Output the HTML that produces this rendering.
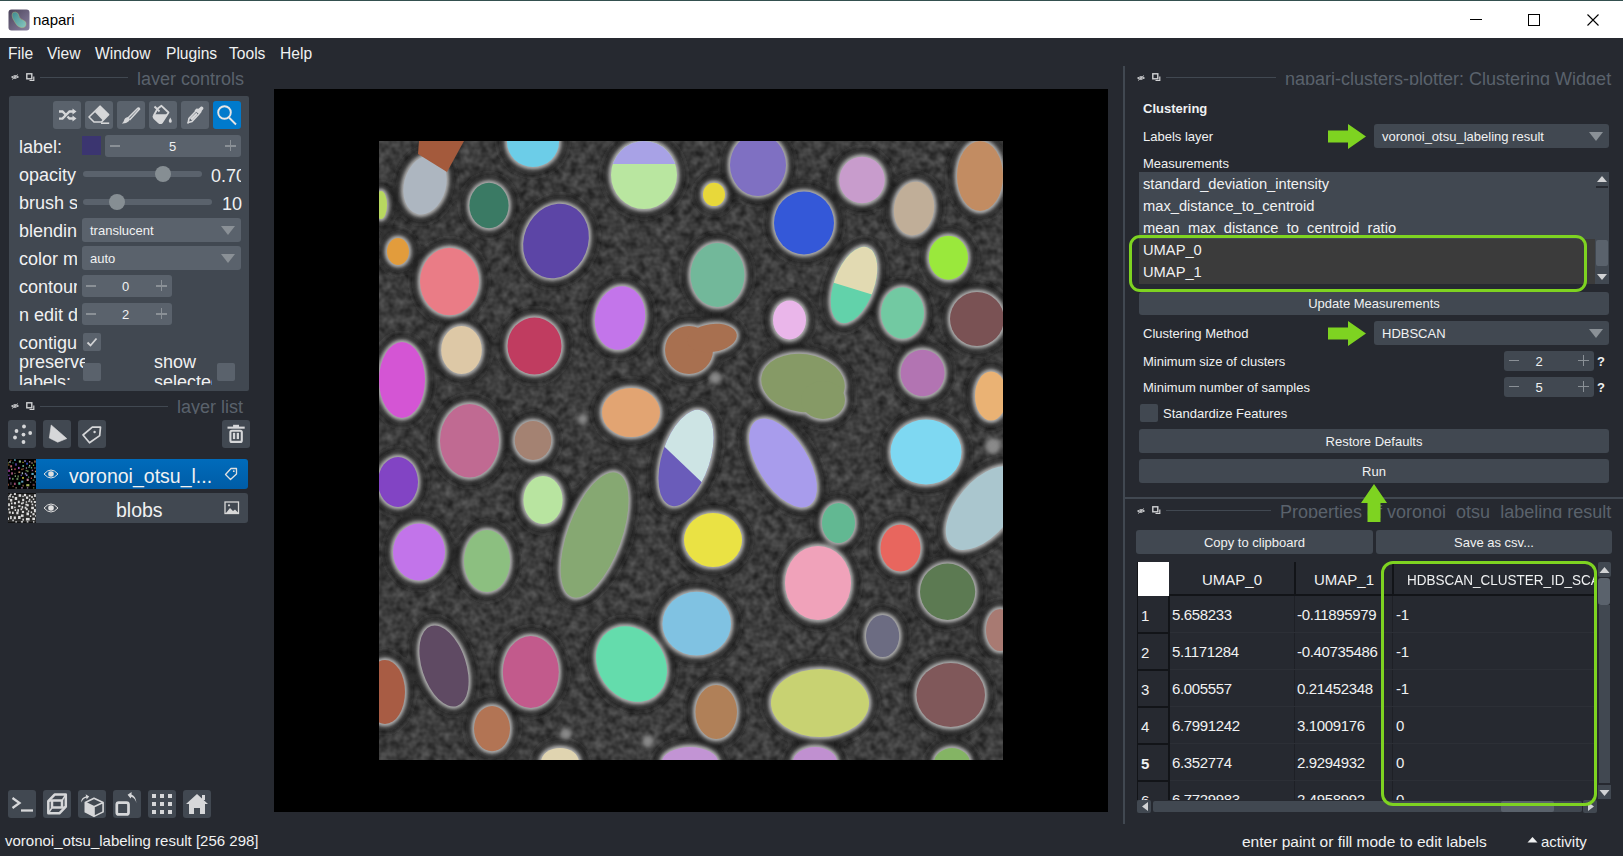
<!DOCTYPE html>
<html><head><meta charset="utf-8">
<style>
*{margin:0;padding:0;box-sizing:border-box}
html,body{width:1623px;height:856px;overflow:hidden;background:#262930;font-family:"Liberation Sans",sans-serif;color:#f0f1f2}
.a{position:absolute}
.t{position:absolute;white-space:nowrap;line-height:1}
#title{left:0;top:0;width:1623px;height:38px;background:#fff;border-top:1px solid #34504f}
.btn{position:absolute;background:#5a626c;border-radius:3px}
.pan{position:absolute;background:#414851;border-radius:2px}
.lbl{font-size:18px;color:#f0f1f2}
.hdr{font-size:18px;color:#5a626c}
.sm{font-size:13px}
.clip{overflow:hidden;position:absolute}
</style></head><body>
<div id="title" class="a">
  <svg class="a" style="left:8px;top:8px" width="22" height="22" viewBox="0 0 22 22"><defs><linearGradient id="lg" x1="0" y1="0" x2="1" y2="1"><stop offset="0" stop-color="#4a4258"/><stop offset="1" stop-color="#8a82a2"/></linearGradient><linearGradient id="lg2" x1="0" y1="0" x2="1" y2="1"><stop offset="0" stop-color="#3e8a90"/><stop offset="1" stop-color="#8ac8c0"/></linearGradient></defs><rect x="0.5" y="0.5" width="21" height="21" rx="3" fill="url(#lg)"/><path d="M4 6Q4 2.5 7.5 3Q10.5 3.5 11 7Q11.5 10 15 11Q19 12.5 18 16Q17 19.5 12.5 18.5Q9 17.5 7 13.5Q4 9 4 6Z" fill="url(#lg2)" stroke="#c0b070" stroke-width="0.4"/></svg>
<div class="t" style="left:33px;top:11px;font-size:15px;color:#000">napari</div>
  <div class="a" style="left:1470px;top:18px;width:12px;height:1px;background:#000"></div>
  <div class="a" style="left:1528px;top:13px;width:12px;height:12px;border:1px solid #000"></div>
  <svg class="a" style="left:1587px;top:13px" width="12" height="12"><path d="M0.5 0.5L11.5 11.5M11.5 0.5L0.5 11.5" stroke="#000" stroke-width="1.1"/></svg>
</div>
<!-- menu -->
<div class="t" style="left:8px;top:46px;font-size:15.6px">File</div>
<div class="t" style="left:47px;top:46px;font-size:15.6px">View</div>
<div class="t" style="left:95px;top:46px;font-size:15.6px">Window</div>
<div class="t" style="left:166px;top:46px;font-size:15.6px">Plugins</div>
<div class="t" style="left:229px;top:46px;font-size:15.6px">Tools</div>
<div class="t" style="left:280px;top:46px;font-size:15.6px">Help</div>


<!-- left dock: layer controls -->
<svg class="a" style="left:11px;top:74px" width="8" height="6" viewBox="0 0 8 6"><path d="M0.5 3Q4 0 7.5 3Q4 6 0.5 3Z" fill="none" stroke="#c8c9cb" stroke-width="1"/><circle cx="4" cy="3" r="1" fill="#c8c9cb"/><path d="M1 5.5L7 0.5" stroke="#c8c9cb" stroke-width="0.9"/></svg>
<svg class="a" style="left:26px;top:73px" width="9" height="9" viewBox="0 0 9 9"><rect x="0.8" y="0.8" width="5" height="5" fill="none" stroke="#d1d2d4" stroke-width="1.4"/><path d="M3.5 7.5H7.8V3.5" fill="none" stroke="#d1d2d4" stroke-width="1.2"/></svg>
<div class="a" style="left:40px;top:77px;width:88px;height:1px;background:#414851"></div>
<div class="clip" style="left:130px;top:66px;width:120px;height:19px"><div class="t hdr" style="left:7px;top:4px">layer controls</div></div>
<div class="pan" style="left:9px;top:96px;width:240px;height:295px"></div>

<!-- tool buttons -->
<div class="btn" style="left:53px;top:101px;width:28px;height:28px"></div>
<svg class="a" style="left:53px;top:101px" width="28" height="28" viewBox="0 0 28 28"><g fill="none" stroke="#d6d7d9" stroke-width="2.4"><path d="M6 10.5H9.5L12.5 13.5"/><path d="M14.5 15.5L16.5 17.5H20"/><path d="M6 17.6H9.5L16.5 10.5H20"/></g><path d="M19.5 7.5L23.5 10.5L19.5 13.5Z M19.5 14.5L23.5 17.5L19.5 20.5Z" fill="#d6d7d9"/></svg>
<div class="btn" style="left:85px;top:101px;width:28px;height:28px"></div>
<svg class="a" style="left:85px;top:101px" width="28" height="28" viewBox="0 0 28 28"><path d="M15.2 5.2L23.6 13.6L16.5 21H9L4 16Z" fill="none" stroke="#d6d7d9" stroke-width="1.6" stroke-linejoin="round"/><path d="M15.2 5.2L23.6 13.6L17.6 19.2L9.8 11Z" fill="#d6d7d9"/><path d="M16 22.2H24.2" stroke="#d6d7d9" stroke-width="1.6"/></svg>
<div class="btn" style="left:117px;top:101px;width:28px;height:28px"></div>
<svg class="a" style="left:117px;top:101px" width="28" height="28" viewBox="0 0 28 28"><path d="M10.5 17.5L20.5 7.5Q22 6.5 22.5 8L12.5 19" fill="none" stroke="#d6d7d9" stroke-width="1.6"/><path d="M10.8 16.2Q7.5 16.5 7 19.5Q6.5 21.5 4.8 22.4Q9 22.8 11.5 20.5Q13 19 12.8 17.8Z" fill="#d6d7d9"/></svg>
<div class="btn" style="left:149px;top:101px;width:28px;height:28px"></div>
<svg class="a" style="left:149px;top:101px" width="28" height="28" viewBox="0 0 28 28"><path d="M5.5 5.5L10.5 10.5" stroke="#d6d7d9" stroke-width="1.8"/><path d="M8.5 7.8L12.5 4.8L19.5 11.5L13 21.5Q11.5 22.8 9.8 21.5L5 17Q4 15.8 4.8 14.5Z" fill="none" stroke="#d6d7d9" stroke-width="1.8" stroke-linejoin="round"/><path d="M5.5 13.2L18.8 13.2L13 21.5Q11.5 22.8 9.8 21.5L5 17Q4 15.8 4.8 14.5Z" fill="#d6d7d9"/><path d="M21.3 16.5Q19.5 19.5 19.8 20.3Q20.2 21.8 21.3 21.8Q22.6 21.8 22.8 20.3Q23 19.5 21.3 16.5Z" fill="#d6d7d9"/></svg>
<div class="btn" style="left:181px;top:101px;width:28px;height:28px"></div>
<svg class="a" style="left:181px;top:101px" width="28" height="28" viewBox="0 0 28 28"><path d="M15 10L8 17.5L7.2 21.5L6.5 22.5" fill="none" stroke="#d6d7d9" stroke-width="1.6"/><path d="M18 13L11 20.5L7.2 21.5" fill="none" stroke="#d6d7d9" stroke-width="1.6"/><path d="M13.5 9.5L15.5 7.5L17.5 7.8L20 5.5Q22 5 22.5 7Q22.5 8 21 9.5L20.2 11.5L18.5 13.5Z" fill="#d6d7d9"/><path d="M9 17.5L15.5 11.5L16.5 13.5L11 19.5Z" fill="#d6d7d9"/></svg>
<div class="btn" style="left:213px;top:101px;width:28px;height:28px;background:#007acc"></div>
<svg class="a" style="left:213px;top:101px" width="28" height="28" viewBox="0 0 28 28"><circle cx="11.5" cy="11.5" r="6.3" fill="none" stroke="#e6e6e6" stroke-width="1.9"/><path d="M16.2 16.8L23 23.5" stroke="#e6e6e6" stroke-width="1.9"/></svg>

<!-- layer control rows -->
<div class="clip" style="left:19px;top:136px;width:58px;height:240px">
 <div class="t lbl" style="left:0;top:2px">label:</div>
 <div class="t lbl" style="left:0;top:30px">opacity</div>
 <div class="t lbl" style="left:0;top:58px">brush size</div>
 <div class="t lbl" style="left:0;top:86px">blending</div>
 <div class="t lbl" style="left:0;top:114px">color mode</div>
 <div class="t lbl" style="left:0;top:142px">contour</div>
 <div class="t lbl" style="left:0;top:170px">n edit dim</div>
 <div class="t lbl" style="left:0;top:198px">contiguous</div>
</div>
<div class="a" style="left:82px;top:136px;width:19px;height:19px;background:#3b3570"></div>
<div class="btn" style="left:105px;top:135px;width:136px;height:22px;border-radius:3px"></div>
<div class="a" style="left:110px;top:145px;width:10px;height:1.5px;background:#8a9096"></div>
<div class="t" style="left:169px;top:140px;font-size:13px">5</div>
<div class="a" style="left:225px;top:145px;width:11px;height:1.5px;background:#8a9096"></div>
<div class="a" style="left:229.8px;top:140px;width:1.5px;height:11px;background:#8a9096"></div>
<!-- opacity slider -->
<div class="a" style="left:83px;top:171px;width:119px;height:6px;border-radius:3px;background:#5a626c"></div>
<div class="a" style="left:155px;top:166px;width:16px;height:16px;border-radius:8px;background:#868e93"></div>
<div class="clip" style="left:211px;top:165px;width:30px;height:22px"><div class="t lbl" style="left:0;top:2px">0.70</div></div>
<!-- brush slider -->
<div class="a" style="left:83px;top:199px;width:129px;height:6px;border-radius:3px;background:#5a626c"></div>
<div class="a" style="left:109px;top:194px;width:16px;height:16px;border-radius:8px;background:#868e93"></div>
<div class="t lbl" style="left:222px;top:195px">10</div>
<!-- dropdowns -->
<div class="btn" style="left:82px;top:218px;width:159px;height:24px"></div>
<div class="t" style="left:90px;top:224px;font-size:13px">translucent</div>
<svg class="a" style="left:221px;top:226px" width="14" height="9"><path d="M0 0H14L7 9Z" fill="#8a9096"/></svg>
<div class="btn" style="left:82px;top:246px;width:159px;height:24px"></div>
<div class="t" style="left:90px;top:252px;font-size:13px">auto</div>
<svg class="a" style="left:221px;top:254px" width="14" height="9"><path d="M0 0H14L7 9Z" fill="#8a9096"/></svg>
<!-- contour spin -->
<div class="btn" style="left:82px;top:275px;width:90px;height:22px"></div>
<div class="a" style="left:86px;top:285px;width:10px;height:1.5px;background:#8a9096"></div>
<div class="t" style="left:122px;top:280px;font-size:13px">0</div>
<div class="a" style="left:156px;top:285px;width:11px;height:1.5px;background:#8a9096"></div>
<div class="a" style="left:160.8px;top:280px;width:1.5px;height:11px;background:#8a9096"></div>
<div class="btn" style="left:82px;top:303px;width:90px;height:22px"></div>
<div class="a" style="left:86px;top:313px;width:10px;height:1.5px;background:#8a9096"></div>
<div class="t" style="left:122px;top:308px;font-size:13px">2</div>
<div class="a" style="left:156px;top:313px;width:11px;height:1.5px;background:#8a9096"></div>
<div class="a" style="left:160.8px;top:308px;width:1.5px;height:11px;background:#8a9096"></div>
<!-- checkboxes -->
<div class="btn" style="left:83px;top:333px;width:18px;height:18px;border-radius:2px"></div>
<svg class="a" style="left:83px;top:333px" width="18" height="18"><path d="M4.5 9.5L7.5 12.5L13.5 5.5" fill="none" stroke="#d1d2d4" stroke-width="1.8"/></svg>
<div class="clip" style="left:19px;top:357px;width:66px;height:28px">
 <div class="t lbl" style="left:0;top:-4px">preserve</div>
 <div class="t lbl" style="left:0;top:16px">labels:</div>
</div>
<div class="btn" style="left:83px;top:363px;width:18px;height:18px;border-radius:2px"></div>
<div class="clip" style="left:154px;top:357px;width:58px;height:28px">
 <div class="t lbl" style="left:0;top:-4px">show</div>
 <div class="t lbl" style="left:0;top:16px">selected</div>
</div>
<div class="btn" style="left:217px;top:363px;width:18px;height:18px;border-radius:2px"></div>

<!-- layer list -->
<svg class="a" style="left:11px;top:403px" width="8" height="6" viewBox="0 0 8 6"><path d="M0.5 3Q4 0 7.5 3Q4 6 0.5 3Z" fill="none" stroke="#c8c9cb" stroke-width="1"/><circle cx="4" cy="3" r="1" fill="#c8c9cb"/><path d="M1 5.5L7 0.5" stroke="#c8c9cb" stroke-width="0.9"/></svg>
<svg class="a" style="left:26px;top:402px" width="9" height="9" viewBox="0 0 9 9"><rect x="0.8" y="0.8" width="5" height="5" fill="none" stroke="#d1d2d4" stroke-width="1.4"/><path d="M3.5 7.5H7.8V3.5" fill="none" stroke="#d1d2d4" stroke-width="1.2"/></svg>
<div class="a" style="left:40px;top:406px;width:128px;height:1px;background:#414851"></div>
<div class="clip" style="left:170px;top:395px;width:80px;height:19px"><div class="t hdr" style="left:7px;top:3px">layer list</div></div>
<div class="btn" style="left:8px;top:420px;width:28px;height:28px;background:#414851"></div>
<svg class="a" style="left:8px;top:420px" width="28" height="28" viewBox="0 0 28 28"><g fill="#d6d7d9"><circle cx="16" cy="6.5" r="1.9"/><circle cx="8.5" cy="11" r="1.9"/><circle cx="22.2" cy="13" r="1.9"/><circle cx="15.5" cy="14.6" r="1.9"/><circle cx="7" cy="17.5" r="1.9"/><circle cx="15.5" cy="22" r="1.9"/></g></svg>
<div class="btn" style="left:43px;top:420px;width:28px;height:28px;background:#414851"></div>
<svg class="a" style="left:43px;top:420px" width="28" height="28" viewBox="0 0 28 28"><path d="M8.2 5L23.8 18.6L14.7 22.2L6.3 18Z" fill="#d6d7d9" stroke="#d6d7d9" stroke-width="0.6" stroke-linejoin="round"/></svg>
<div class="btn" style="left:78px;top:420px;width:28px;height:28px;background:#414851"></div>
<svg class="a" style="left:78px;top:420px" width="28" height="28" viewBox="0 0 28 28"><path d="M5 15L14.3 7.2H22.5L21.7 15.6L11.5 22.8Z" fill="none" stroke="#d6d7d9" stroke-width="1.7" stroke-linejoin="round"/><circle cx="16.6" cy="12" r="1.2" fill="#d6d7d9"/></svg>
<div class="btn" style="left:222px;top:420px;width:28px;height:28px;background:#414851"></div>
<svg class="a" style="left:222px;top:420px" width="28" height="28" viewBox="0 0 28 28"><g fill="#d6d7d9"><rect x="11.1" y="4.8" width="5.9" height="2.5"/><rect x="5.5" y="6.6" width="17.2" height="2.1"/><rect x="10.9" y="12.8" width="2.3" height="6.3"/><rect x="14.7" y="12.8" width="2.3" height="6.3"/></g><rect x="8.4" y="10.7" width="11.4" height="11.2" rx="1.5" fill="none" stroke="#d6d7d9" stroke-width="2.1"/></svg>
<!-- layer rows -->
<svg class="a" style="left:8px;top:459px" width="28" height="30" viewBox="0 0 28 30"><rect width="28" height="30" fill="#000"/><rect x="1.31" y="2.01" width="1.32" height="2.01" fill="#b3bac2" opacity="0.8"/><rect x="2.24" y="0.80" width="1.26" height="1.20" fill="#a45a3c" opacity="0.8"/><rect x="4.32" y="3.18" width="1.23" height="1.43" fill="#2f7a5f" opacity="0.8"/><rect x="6.09" y="0.26" width="1.63" height="1.57" fill="#6ccde8" opacity="0.8"/><rect x="6.94" y="4.29" width="2.01" height="2.39" fill="#5c45a6" opacity="0.8"/><rect x="0.25" y="5.36" width="1.20" height="1.20" fill="#e29c3c" opacity="0.8"/><rect x="2.24" y="6.25" width="1.85" height="2.12" fill="#ea7c86" opacity="0.8"/><rect x="3.06" y="9.62" width="1.28" height="1.51" fill="#ddc8a6" opacity="0.8"/><rect x="6.13" y="9.30" width="1.70" height="1.79" fill="#c03c60" opacity="0.8"/><rect x="0.31" y="10.53" width="1.44" height="2.39" fill="#d455d4" opacity="0.8"/><rect x="10.85" y="1.46" width="2.07" height="2.14" fill="#b9e6a0" opacity="0.8"/><rect x="16.13" y="1.10" width="1.76" height="1.95" fill="#7f70c2" opacity="0.8"/><rect x="14.43" y="2.80" width="1.20" height="1.20" fill="#e8d83a" opacity="0.8"/><rect x="18.13" y="3.69" width="1.88" height="1.98" fill="#2c56da" opacity="0.8"/><rect x="14.34" y="6.01" width="1.70" height="2.01" fill="#72b89a" opacity="0.8"/><rect x="10.03" y="7.94" width="1.57" height="2.01" fill="#c375ea" opacity="0.8"/><rect x="17.82" y="8.42" width="1.20" height="1.22" fill="#eab6ea" opacity="0.8"/><rect x="20.96" y="2.02" width="1.43" height="1.46" fill="#d092d0" opacity="0.8"/><rect x="23.38" y="3.19" width="1.26" height="1.70" fill="#c2aa92" opacity="0.8"/><rect x="26.25" y="1.47" width="1.44" height="2.20" fill="#c28c62" opacity="0.8"/><rect x="24.93" y="5.55" width="1.23" height="1.38" fill="#9ae83c" opacity="0.8"/><rect x="22.82" y="7.91" width="1.35" height="1.62" fill="#72c9a2" opacity="0.8"/><rect x="25.99" y="8.14" width="1.70" height="1.70" fill="#7c4d52" opacity="0.8"/><rect x="3.13" y="13.29" width="1.85" height="2.31" fill="#c06a92" opacity="0.8"/><rect x="6.31" y="13.82" width="1.20" height="1.23" fill="#a48272" opacity="0.8"/><rect x="0.22" y="15.52" width="1.26" height="1.57" fill="#8244c4" opacity="0.8"/><rect x="6.74" y="16.36" width="1.23" height="1.51" fill="#b2e296" opacity="0.8"/><rect x="0.98" y="18.55" width="1.63" height="1.79" fill="#c274ea" opacity="0.8"/><rect x="4.12" y="18.87" width="1.44" height="1.95" fill="#84c274" opacity="0.8"/><rect x="9.49" y="16.39" width="1.38" height="2.07" fill="#7aa66a" opacity="0.8"/><rect x="8.47" y="18.84" width="1.82" height="2.20" fill="#7aa66a" opacity="0.8"/><rect x="10.40" y="12.41" width="1.82" height="1.54" fill="#e2a472" opacity="0.8"/><rect x="17.56" y="10.87" width="1.76" height="1.44" fill="#7a9a5c" opacity="0.8"/><rect x="18.90" y="11.41" width="1.70" height="1.70" fill="#7a9a5c" opacity="0.8"/><rect x="23.70" y="10.68" width="1.38" height="1.46" fill="#b274b2" opacity="0.8"/><rect x="26.86" y="11.67" width="1.20" height="1.54" fill="#eab274" opacity="0.8"/><rect x="23.43" y="13.93" width="2.23" height="2.04" fill="#7ad6f4" opacity="0.8"/><rect x="16.79" y="13.84" width="1.51" height="1.70" fill="#a89cec" opacity="0.8"/><rect x="17.89" y="15.36" width="1.63" height="1.70" fill="#a89cec" opacity="0.8"/><rect x="26.06" y="16.23" width="1.63" height="2.83" fill="#a8c6d0" opacity="0.8"/><rect x="20.02" y="17.51" width="1.20" height="1.26" fill="#5cba8a" opacity="0.8"/><rect x="22.77" y="18.52" width="1.26" height="1.48" fill="#e46262" opacity="0.8"/><rect x="14.08" y="18.06" width="1.82" height="1.70" fill="#eae244" opacity="0.8"/><rect x="18.66" y="19.67" width="2.07" height="2.32" fill="#eaa0b8" opacity="0.8"/><rect x="24.65" y="20.34" width="1.73" height="1.77" fill="#5c7a52" opacity="0.8"/><rect x="22.00" y="22.55" width="1.20" height="1.32" fill="#646478" opacity="0.8"/><rect x="27.27" y="22.28" width="1.20" height="1.32" fill="#a87a72" opacity="0.8"/><rect x="18.25" y="25.15" width="3.08" height="2.14" fill="#cad86e" opacity="0.8"/><rect x="24.58" y="24.85" width="2.15" height="2.01" fill="#7c4c52" opacity="0.8"/><rect x="13.18" y="21.66" width="2.15" height="2.00" fill="#74bce2" opacity="0.8"/><rect x="10.29" y="23.21" width="2.07" height="2.51" fill="#64dcac" opacity="0.8"/><rect x="14.48" y="25.77" width="1.31" height="1.70" fill="#b27c54" opacity="0.8"/><rect x="2.23" y="23.24" width="1.38" height="2.64" fill="#5f4a63" opacity="0.8"/><rect x="-0.36" y="24.72" width="1.26" height="2.01" fill="#a85c44" opacity="0.8"/><rect x="5.93" y="23.70" width="1.76" height="2.26" fill="#c25a8c" opacity="0.8"/><rect x="4.47" y="26.65" width="1.20" height="1.43" fill="#b27454" opacity="0.8"/><rect x="7.52" y="28.27" width="1.20" height="1.20" fill="#e0d4b0" opacity="0.8"/><rect x="13.08" y="28.27" width="1.76" height="1.20" fill="#c294d4" opacity="0.8"/><rect x="18.87" y="28.27" width="1.38" height="1.20" fill="#c090d0" opacity="0.8"/><rect x="25.11" y="28.31" width="1.20" height="1.20" fill="#84b464" opacity="0.8"/><rect x="-0.51" y="3.27" width="1.20" height="1.20" fill="#b8d860" opacity="0.8"/><rect x="13.74" y="13.28" width="1.32" height="2.01" fill="#cde4e4" opacity="0.8"/><rect x="12.64" y="15.55" width="1.38" height="1.51" fill="#6a5cba" opacity="0.8"/><rect x="20.40" y="7.65" width="1.20" height="1.32" fill="#62d2aa" opacity="0.8"/><rect x="21.07" y="5.91" width="1.20" height="1.57" fill="#e2dab2" opacity="0.8"/><rect x="13.11" y="9.75" width="1.51" height="1.44" fill="#aa6c4c" opacity="0.8"/><rect x="14.51" y="9.33" width="1.32" height="1.20" fill="#aa6c4c" opacity="0.8"/></svg>
<div class="a" style="left:36px;top:459px;width:212px;height:30px;background:linear-gradient(#006bbb,#005ca6);border-radius:0 3px 3px 0"></div>
<svg class="a" style="left:43px;top:468px" width="16" height="12" viewBox="0 0 16 12"><path d="M1 6Q8 -2 15 6Q8 14 1 6Z" fill="none" stroke="#e0e0e0" stroke-width="1"/><circle cx="8" cy="6" r="2.8" fill="#e0e0e0"/></svg>
<div class="t" style="left:69px;top:467px;font-size:19.5px">voronoi_otsu_l...</div>
<svg class="a" style="left:224px;top:467px" width="14" height="14" viewBox="0 0 14 14"><path d="M7 1.5H12.5V7L6.5 12.5L1.5 7.5Z" fill="none" stroke="#e0e0e0" stroke-width="1.3" stroke-linejoin="round"/><circle cx="9.8" cy="4.2" r="0.9" fill="#e0e0e0"/></svg>
<svg class="a" style="left:8px;top:493px" width="28" height="30" viewBox="0 0 28 30"><rect width="28" height="30" fill="#111"/><rect x="0" y="1" width="28" height="28" fill="#2a2a2a"/><rect x="1.17" y="1.80" width="1.60" height="2.44" fill="#dcdcdc"/><rect x="2.11" y="0.70" width="1.53" height="1.40" fill="#dcdcdc"/><rect x="4.19" y="3.03" width="1.50" height="1.73" fill="#dcdcdc"/><rect x="5.92" y="0.09" width="1.98" height="1.91" fill="#dcdcdc"/><rect x="6.72" y="4.04" width="2.44" height="2.90" fill="#dcdcdc"/><rect x="0.15" y="5.26" width="1.40" height="1.40" fill="#dcdcdc"/><rect x="2.04" y="6.02" width="2.25" height="2.57" fill="#dcdcdc"/><rect x="2.93" y="9.46" width="1.55" height="1.83" fill="#dcdcdc"/><rect x="5.95" y="9.11" width="2.06" height="2.17" fill="#dcdcdc"/><rect x="0.15" y="10.28" width="1.75" height="2.90" fill="#dcdcdc"/><rect x="10.63" y="1.23" width="2.52" height="2.59" fill="#dcdcdc"/><rect x="15.94" y="0.89" width="2.14" height="2.36" fill="#dcdcdc"/><rect x="14.33" y="2.70" width="1.40" height="1.40" fill="#dcdcdc"/><rect x="17.93" y="3.48" width="2.29" height="2.40" fill="#dcdcdc"/><rect x="14.16" y="5.79" width="2.06" height="2.44" fill="#dcdcdc"/><rect x="9.86" y="7.72" width="1.91" height="2.44" fill="#dcdcdc"/><rect x="17.72" y="8.29" width="1.40" height="1.49" fill="#dcdcdc"/><rect x="20.81" y="1.86" width="1.73" height="1.78" fill="#dcdcdc"/><rect x="23.24" y="3.00" width="1.53" height="2.06" fill="#dcdcdc"/><rect x="26.09" y="1.24" width="1.75" height="2.67" fill="#dcdcdc"/><rect x="24.80" y="5.40" width="1.50" height="1.68" fill="#dcdcdc"/><rect x="22.67" y="7.73" width="1.64" height="1.97" fill="#dcdcdc"/><rect x="25.80" y="7.96" width="2.06" height="2.06" fill="#dcdcdc"/><rect x="2.94" y="13.04" width="2.25" height="2.81" fill="#dcdcdc"/><rect x="6.21" y="13.69" width="1.40" height="1.50" fill="#dcdcdc"/><rect x="0.09" y="15.35" width="1.53" height="1.91" fill="#dcdcdc"/><rect x="6.61" y="16.19" width="1.50" height="1.83" fill="#dcdcdc"/><rect x="0.80" y="18.36" width="1.98" height="2.17" fill="#dcdcdc"/><rect x="3.97" y="18.66" width="1.75" height="2.36" fill="#dcdcdc"/><rect x="9.35" y="16.16" width="1.68" height="2.52" fill="#dcdcdc"/><rect x="8.27" y="18.60" width="2.21" height="2.67" fill="#dcdcdc"/><rect x="10.20" y="12.25" width="2.21" height="1.87" fill="#dcdcdc"/><rect x="17.37" y="10.71" width="2.14" height="1.75" fill="#dcdcdc"/><rect x="18.71" y="11.23" width="2.06" height="2.06" fill="#dcdcdc"/><rect x="23.55" y="10.52" width="1.68" height="1.78" fill="#dcdcdc"/><rect x="26.76" y="11.51" width="1.40" height="1.87" fill="#dcdcdc"/><rect x="23.19" y="13.72" width="2.71" height="2.48" fill="#dcdcdc"/><rect x="16.63" y="13.66" width="1.83" height="2.06" fill="#dcdcdc"/><rect x="17.72" y="15.18" width="1.98" height="2.06" fill="#dcdcdc"/><rect x="25.89" y="15.93" width="1.98" height="3.43" fill="#dcdcdc"/><rect x="19.92" y="17.38" width="1.40" height="1.53" fill="#dcdcdc"/><rect x="22.64" y="18.37" width="1.53" height="1.79" fill="#dcdcdc"/><rect x="13.88" y="17.87" width="2.21" height="2.06" fill="#dcdcdc"/><rect x="18.44" y="19.42" width="2.52" height="2.82" fill="#dcdcdc"/><rect x="24.46" y="20.15" width="2.11" height="2.15" fill="#dcdcdc"/><rect x="21.90" y="22.41" width="1.40" height="1.60" fill="#dcdcdc"/><rect x="27.17" y="22.14" width="1.40" height="1.60" fill="#dcdcdc"/><rect x="17.92" y="24.92" width="3.74" height="2.59" fill="#dcdcdc"/><rect x="24.34" y="24.64" width="2.62" height="2.44" fill="#dcdcdc"/><rect x="12.95" y="21.44" width="2.62" height="2.43" fill="#dcdcdc"/><rect x="10.07" y="22.94" width="2.52" height="3.05" fill="#dcdcdc"/><rect x="14.34" y="25.59" width="1.59" height="2.06" fill="#dcdcdc"/><rect x="2.08" y="22.96" width="1.68" height="3.20" fill="#dcdcdc"/><rect x="-0.49" y="24.50" width="1.53" height="2.44" fill="#dcdcdc"/><rect x="5.74" y="23.45" width="2.14" height="2.75" fill="#dcdcdc"/><rect x="4.37" y="26.50" width="1.40" height="1.73" fill="#dcdcdc"/><rect x="7.40" y="28.17" width="1.45" height="1.40" fill="#dcdcdc"/><rect x="12.89" y="28.17" width="2.14" height="1.40" fill="#dcdcdc"/><rect x="18.73" y="28.17" width="1.68" height="1.40" fill="#dcdcdc"/><rect x="25.01" y="28.21" width="1.40" height="1.40" fill="#dcdcdc"/><rect x="-0.61" y="3.17" width="1.40" height="1.40" fill="#dcdcdc"/><rect x="13.60" y="13.06" width="1.60" height="2.44" fill="#dcdcdc"/><rect x="12.49" y="15.39" width="1.68" height="1.83" fill="#dcdcdc"/><rect x="20.28" y="7.51" width="1.45" height="1.60" fill="#dcdcdc"/><rect x="20.97" y="5.75" width="1.40" height="1.91" fill="#dcdcdc"/><rect x="12.95" y="9.59" width="1.83" height="1.75" fill="#dcdcdc"/><rect x="14.37" y="9.23" width="1.60" height="1.40" fill="#dcdcdc"/></svg>
<div class="a" style="left:36px;top:493px;width:212px;height:30px;background:#414851;border-radius:0 3px 3px 0"></div>
<svg class="a" style="left:43px;top:502px" width="16" height="12" viewBox="0 0 16 12"><path d="M1 6Q8 -2 15 6Q8 14 1 6Z" fill="none" stroke="#e0e0e0" stroke-width="1"/><circle cx="8" cy="6" r="2.8" fill="#e0e0e0"/></svg>
<div class="t" style="left:116px;top:501px;font-size:19.5px">blobs</div>
<svg class="a" style="left:224px;top:501px" width="16" height="14" viewBox="0 0 16 14"><rect x="1" y="1" width="13.5" height="11.5" fill="none" stroke="#d8d8d8" stroke-width="1.3"/><path d="M2 12L6 7L9 10L11 8.5L14 11.5V12.5H2Z" fill="#d8d8d8"/><circle cx="5" cy="4.3" r="1.1" fill="#d8d8d8"/></svg>
<!-- bottom toolbar -->
<div class="btn" style="left:8px;top:790px;width:28px;height:28px;background:#414851"></div>
<svg class="a" style="left:8px;top:790px" width="28" height="28" viewBox="0 0 28 28"><path d="M4.5 8L11.5 13L4.5 18" fill="none" stroke="#d6d7d9" stroke-width="2.3"/><path d="M13 20.5H25" stroke="#d6d7d9" stroke-width="2.3"/></svg>
<div class="btn" style="left:43px;top:790px;width:28px;height:28px;background:#414851"></div>
<svg class="a" style="left:43px;top:790px" width="28" height="28" viewBox="0 0 28 28"><g fill="none" stroke="#d6d7d9" stroke-width="2.5" stroke-linejoin="round"><path d="M5.3 11.2L11.6 4.6H22.8V16.7L16.4 23.3H5.3Z"/><rect x="9" y="10.6" width="10" height="7"/></g><g stroke="#d6d7d9" stroke-width="1.6"><path d="M9 10.6L5.3 11.2M19 10.6L22.8 4.6M19 17.6L22.8 16.7M9 17.6L5.3 23.3"/></g></svg>
<div class="btn" style="left:78px;top:790px;width:28px;height:28px;background:#414851"></div>
<svg class="a" style="left:78px;top:790px" width="28" height="28" viewBox="0 0 28 28"><path d="M7.3 12.5L16 16.7V26.4L7.3 21.9Z" fill="#d6d7d9"/><path d="M16 8.3L25.1 12.5V21.9L16 26.4L7.3 21.9V12.5Z M7.3 12.5L16 16.7L25.1 12.5 M16 16.7V26.4" fill="none" stroke="#d6d7d9" stroke-width="1.6" stroke-linejoin="round"/><path d="M3.2 12.4Q2.8 7.5 8.2 6.2L7.6 4.2L11.2 6.5L8.6 9.4L8.4 7.8Q5 8.6 3.2 12.4Z" fill="#d6d7d9"/></svg>
<div class="btn" style="left:113px;top:790px;width:28px;height:28px;background:#414851"></div>
<svg class="a" style="left:113px;top:790px" width="28" height="28" viewBox="0 0 28 28"><rect x="3.8" y="12.6" width="11.7" height="11.8" rx="2" fill="none" stroke="#d6d7d9" stroke-width="2.7"/><path d="M23.4 13.2Q22.5 8.5 18.4 6.8L17.6 8.6L14.6 4.8L18.6 2L18.5 4.6Q23 6.5 23.4 13.2Z" fill="#d6d7d9"/></svg>
<div class="btn" style="left:148px;top:790px;width:28px;height:28px;background:#414851"></div>
<svg class="a" style="left:148px;top:790px" width="28" height="28" viewBox="0 0 28 28"><g fill="#d6d7d9"><rect x="4" y="4" width="4" height="4"/><rect x="12" y="4" width="4" height="4"/><rect x="20" y="4" width="4" height="4"/><rect x="4" y="12" width="4" height="4"/><rect x="12" y="12" width="4" height="4"/><rect x="20" y="12" width="4" height="4"/><rect x="4" y="20" width="4" height="4"/><rect x="12" y="20" width="4" height="4"/><rect x="20" y="20" width="4" height="4"/></g></svg>
<div class="btn" style="left:183px;top:790px;width:28px;height:28px;background:#414851"></div>
<svg class="a" style="left:183px;top:790px" width="28" height="28" viewBox="0 0 28 28"><path d="M14 4L25 14H22V24H17V18H11V24H6V14H3Z" fill="#d6d7d9"/><rect x="19" y="5" width="3" height="5" fill="#d6d7d9"/></svg>
<div class="t" style="left:5px;top:833px;font-size:15px">voronoi_otsu_labeling result [256 298]</div>

<!-- right dock -->
<div class="a" style="left:1123px;top:66px;width:2px;height:758px;background:#414851"></div>
<svg class="a" style="left:1137px;top:75px" width="8" height="6" viewBox="0 0 8 6"><path d="M0.5 3Q4 0 7.5 3Q4 6 0.5 3Z" fill="none" stroke="#c8c9cb" stroke-width="1"/><circle cx="4" cy="3" r="1" fill="#c8c9cb"/><path d="M1 5.5L7 0.5" stroke="#c8c9cb" stroke-width="0.9"/></svg>
<svg class="a" style="left:1152px;top:73px" width="9" height="9" viewBox="0 0 9 9"><rect x="0.8" y="0.8" width="5" height="5" fill="none" stroke="#d1d2d4" stroke-width="1.4"/><path d="M3.5 7.5H7.8V3.5" fill="none" stroke="#d1d2d4" stroke-width="1.2"/></svg>
<div class="a" style="left:1166px;top:77px;width:110px;height:1px;background:#414851"></div>
<div class="clip" style="left:1280px;top:66px;width:340px;height:19px"><div class="t hdr" style="left:5px;top:4px">napari-clusters-plotter: Clustering Widget</div></div>
<div class="t sm" style="left:1143px;top:102px;font-weight:bold">Clustering</div>
<div class="t sm" style="left:1143px;top:130px">Labels layer</div>
<svg class="a" style="left:1328px;top:124px" width="38" height="25" viewBox="0 0 38 25"><path d="M0 6.5H20V0L38 12.5L20 25V18.5H0Z" fill="#7ed321"/></svg>
<div class="btn" style="left:1374px;top:124px;width:235px;height:24px;background:#414851"></div>
<div class="t sm" style="left:1382px;top:130px">voronoi_otsu_labeling result</div>
<svg class="a" style="left:1589px;top:132px" width="14" height="9"><path d="M0 0H14L7 9Z" fill="#8a9096"/></svg>
<div class="t sm" style="left:1143px;top:157px">Measurements</div>
<div class="a" style="left:1139px;top:172px;width:470px;height:112px;background:#414851"></div>
<div class="clip" style="left:1139px;top:172px;width:456px;height:112px">
 <div class="t" style="left:4px;top:4.5px;font-size:14.7px">standard_deviation_intensity</div>
 <div class="t" style="left:4px;top:26.5px;font-size:14.7px">max_distance_to_centroid</div>
 <div class="t" style="left:4px;top:48.5px;font-size:14.7px">mean_max_distance_to_centroid_ratio</div>
 <div class="a" style="left:0;top:67px;width:456px;height:45px;background:#3b3b3b"></div>
 <div class="t" style="left:4px;top:70.5px;font-size:14.7px">UMAP_0</div>
 <div class="t" style="left:4px;top:92.5px;font-size:14.7px">UMAP_1</div>
</div>
<!-- list scrollbar -->
<div class="a" style="left:1595px;top:172px;width:14px;height:112px;background:#414851"></div>
<svg class="a" style="left:1596px;top:175px" width="12" height="8"><path d="M1 7H11L6 1Z" fill="#d1d2d4"/></svg>
<div class="a" style="left:1596px;top:186px;width:12px;height:2px;background:#262930"></div>
<div class="a" style="left:1596px;top:240px;width:12px;height:26px;background:#5a626c;border-radius:2px"></div>
<svg class="a" style="left:1596px;top:273px" width="12" height="8"><path d="M1 1H11L6 7Z" fill="#d1d2d4"/></svg>
<div class="a" style="left:1129px;top:235px;width:458px;height:57px;border:3px solid #7ed321;border-radius:11px"></div>
<div class="btn" style="left:1139px;top:292px;width:470px;height:23px;background:#414851"></div>
<div class="t sm" style="left:1139px;top:297px;width:470px;text-align:center">Update Measurements</div>
<div class="t sm" style="left:1143px;top:327px">Clustering Method</div>
<svg class="a" style="left:1328px;top:321px" width="38" height="25" viewBox="0 0 38 25"><path d="M0 6.5H20V0L38 12.5L20 25V18.5H0Z" fill="#7ed321"/></svg>
<div class="btn" style="left:1374px;top:321px;width:235px;height:24px;background:#414851"></div>
<div class="t sm" style="left:1382px;top:327px">HDBSCAN</div>
<svg class="a" style="left:1589px;top:329px" width="14" height="9"><path d="M0 0H14L7 9Z" fill="#8a9096"/></svg>
<div class="t sm" style="left:1143px;top:355px">Minimum size of clusters</div>
<div class="btn" style="left:1504px;top:351px;width:90px;height:20px;background:#414851"></div>
<div class="a" style="left:1509px;top:360px;width:10px;height:1.3px;background:#8a9096"></div>
<div class="t sm" style="left:1535.5px;top:355px">2</div>
<div class="a" style="left:1578px;top:360px;width:11px;height:1.3px;background:#8a9096"></div>
<div class="a" style="left:1582.8px;top:355px;width:1.3px;height:11px;background:#8a9096"></div>
<div class="t sm" style="left:1597px;top:355px;font-weight:bold">?</div>
<div class="t sm" style="left:1143px;top:381px">Minimum number of samples</div>
<div class="btn" style="left:1504px;top:377px;width:90px;height:20px;background:#414851"></div>
<div class="a" style="left:1509px;top:386px;width:10px;height:1.3px;background:#8a9096"></div>
<div class="t sm" style="left:1535.5px;top:381px">5</div>
<div class="a" style="left:1578px;top:386px;width:11px;height:1.3px;background:#8a9096"></div>
<div class="a" style="left:1582.8px;top:381px;width:1.3px;height:11px;background:#8a9096"></div>
<div class="t sm" style="left:1597px;top:381px;font-weight:bold">?</div>
<div class="btn" style="left:1140px;top:404px;width:18px;height:18px;background:#414851;border-radius:2px"></div>
<div class="t sm" style="left:1163px;top:407px">Standardize Features</div>
<div class="btn" style="left:1139px;top:429px;width:470px;height:24px;background:#414851"></div>
<div class="t sm" style="left:1139px;top:435px;width:470px;text-align:center">Restore Defaults</div>
<div class="btn" style="left:1139px;top:459px;width:470px;height:24px;background:#414851"></div>
<div class="t sm" style="left:1139px;top:465px;width:470px;text-align:center">Run</div>
<div class="a" style="left:1125px;top:497px;width:498px;height:2px;background:#414851"></div>
<!-- properties -->
<svg class="a" style="left:1137px;top:508px" width="8" height="6" viewBox="0 0 8 6"><path d="M0.5 3Q4 0 7.5 3Q4 6 0.5 3Z" fill="none" stroke="#c8c9cb" stroke-width="1"/><circle cx="4" cy="3" r="1" fill="#c8c9cb"/><path d="M1 5.5L7 0.5" stroke="#c8c9cb" stroke-width="0.9"/></svg>
<svg class="a" style="left:1152px;top:506px" width="9" height="9" viewBox="0 0 9 9"><rect x="0.8" y="0.8" width="5" height="5" fill="none" stroke="#d1d2d4" stroke-width="1.4"/><path d="M3.5 7.5H7.8V3.5" fill="none" stroke="#d1d2d4" stroke-width="1.2"/></svg>
<div class="a" style="left:1166px;top:510px;width:105px;height:1px;background:#414851"></div>
<div class="clip" style="left:1276px;top:499px;width:340px;height:19px"><div class="t hdr" style="left:4px;top:4px">Properties of voronoi_otsu_labeling result</div></div>
<svg class="a" style="left:1361px;top:484px" width="26" height="38" viewBox="0 0 26 38"><path d="M6.5 38V19H0L13 0L26 19H19.5V38Z" fill="#7ed321"/></svg>
<div class="btn" style="left:1136px;top:530px;width:237px;height:24px;background:#414851"></div>
<div class="t sm" style="left:1136px;top:536px;width:237px;text-align:center">Copy to clipboard</div>
<div class="btn" style="left:1376px;top:530px;width:236px;height:24px;background:#414851"></div>
<div class="t sm" style="left:1376px;top:536px;width:236px;text-align:center">Save as csv...</div>

<!-- table -->
<div class="clip" style="left:1137px;top:562px;width:458px;height:238px">
 <div class="a" style="left:0;top:0;width:32px;height:34px;background:#fff"></div>
 <div class="a" style="left:32px;top:0;width:426px;height:32px;background:#262930"></div>
 <div class="a" style="left:32px;top:32px;width:426px;height:2px;background:#121418"></div>
 <div class="a" style="left:157px;top:0;width:2px;height:32px;background:#121418"></div>
 <div class="a" style="left:255px;top:0;width:2px;height:32px;background:#121418"></div>
 <div class="t" style="left:32px;top:10px;width:126px;text-align:center;font-size:15px">UMAP_0</div>
 <div class="t" style="left:159px;top:10px;width:96px;text-align:center;font-size:15px">UMAP_1</div>
 <div class="t" style="left:270px;top:10px;font-size:15px;transform:scaleX(0.9);transform-origin:0 0">HDBSCAN_CLUSTER_ID_SCALER</div>
 <div class="a" style="left:31px;top:34px;width:2px;height:210px;background:#121418"></div>
 <div class="a" style="left:157px;top:34px;width:1px;height:210px;background:#1e2026"></div>
 <div class="a" style="left:255px;top:34px;width:1px;height:210px;background:#1e2026"></div>
 <div class="a" style="left:1px;top:70px;width:30px;height:2px;background:#121418"></div>
 <div class="a" style="left:33px;top:70px;width:425px;height:1px;background:#2c2f36"></div>
 <div class="t" style="left:4px;top:46px;font-size:15px">1</div>
 <div class="t" style="left:35px;top:45px;font-size:15px;letter-spacing:-0.35px">5.658233</div>
 <div class="t" style="left:160px;top:45px;font-size:15px;letter-spacing:-0.35px">-0.11895979</div>
 <div class="t" style="left:259px;top:45px;font-size:15px;letter-spacing:-0.35px">-1</div>
 <div class="a" style="left:1px;top:107px;width:30px;height:2px;background:#121418"></div>
 <div class="a" style="left:33px;top:107px;width:425px;height:1px;background:#2c2f36"></div>
 <div class="t" style="left:4px;top:83px;font-size:15px">2</div>
 <div class="t" style="left:35px;top:82px;font-size:15px;letter-spacing:-0.35px">5.1171284</div>
 <div class="t" style="left:160px;top:82px;font-size:15px;letter-spacing:-0.35px">-0.40735486</div>
 <div class="t" style="left:259px;top:82px;font-size:15px;letter-spacing:-0.35px">-1</div>
 <div class="a" style="left:1px;top:144px;width:30px;height:2px;background:#121418"></div>
 <div class="a" style="left:33px;top:144px;width:425px;height:1px;background:#2c2f36"></div>
 <div class="t" style="left:4px;top:120px;font-size:15px">3</div>
 <div class="t" style="left:35px;top:119px;font-size:15px;letter-spacing:-0.35px">6.005557</div>
 <div class="t" style="left:160px;top:119px;font-size:15px;letter-spacing:-0.35px">0.21452348</div>
 <div class="t" style="left:259px;top:119px;font-size:15px;letter-spacing:-0.35px">-1</div>
 <div class="a" style="left:1px;top:181px;width:30px;height:2px;background:#121418"></div>
 <div class="a" style="left:33px;top:181px;width:425px;height:1px;background:#2c2f36"></div>
 <div class="t" style="left:4px;top:157px;font-size:15px">4</div>
 <div class="t" style="left:35px;top:156px;font-size:15px;letter-spacing:-0.35px">6.7991242</div>
 <div class="t" style="left:160px;top:156px;font-size:15px;letter-spacing:-0.35px">3.1009176</div>
 <div class="t" style="left:259px;top:156px;font-size:15px;letter-spacing:-0.35px">0</div>
 <div class="a" style="left:1px;top:218px;width:30px;height:2px;background:#121418"></div>
 <div class="a" style="left:33px;top:218px;width:425px;height:1px;background:#2c2f36"></div>
 <div class="t" style="left:4px;top:194px;font-size:15px;font-weight:bold">5</div>
 <div class="t" style="left:35px;top:193px;font-size:15px;letter-spacing:-0.35px">6.352774</div>
 <div class="t" style="left:160px;top:193px;font-size:15px;letter-spacing:-0.35px">2.9294932</div>
 <div class="t" style="left:259px;top:193px;font-size:15px;letter-spacing:-0.35px">0</div>
 <div class="a" style="left:1px;top:255px;width:30px;height:2px;background:#121418"></div>
 <div class="a" style="left:33px;top:255px;width:425px;height:1px;background:#2c2f36"></div>
 <div class="t" style="left:4px;top:231px;font-size:15px">6</div>
 <div class="t" style="left:35px;top:230px;font-size:15px;letter-spacing:-0.35px">6.7729983</div>
 <div class="t" style="left:160px;top:230px;font-size:15px;letter-spacing:-0.35px">2.4958992</div>
 <div class="t" style="left:259px;top:230px;font-size:15px;letter-spacing:-0.35px">0</div>
</div>
<div class="a" style="left:1137px;top:562px;width:1px;height:238px;background:#121418"></div>
<!-- v scrollbar -->
<div class="a" style="left:1598px;top:562px;width:13px;height:238px;background:#262930"></div>
<div class="a" style="left:1598px;top:562px;width:13px;height:15px;background:#414851;border-radius:2px"></div><svg class="a" style="left:1598px;top:565px" width="13" height="9"><path d="M1.5 8H11.5L6.5 2Z" fill="#d1d2d4"/></svg>
<div class="a" style="left:1598px;top:578px;width:12px;height:27px;background:#5a626c;border-radius:3px"></div>
<div class="a" style="left:1599px;top:605px;width:11px;height:178px;background:#414851"></div>
<div class="a" style="left:1598px;top:785px;width:13px;height:14px;background:#414851"></div>
<svg class="a" style="left:1598px;top:788px" width="13" height="9"><path d="M1.5 2H11.5L6.5 8Z" fill="#d1d2d4"/></svg>
<!-- h scrollbar -->
<div class="a" style="left:1137px;top:800px;width:460px;height:13px;background:#262930"></div><div class="a" style="left:1137px;top:800px;width:14px;height:13px;background:#414851;border-radius:2px"></div><div class="a" style="left:1583px;top:800px;width:14px;height:13px;background:#414851;border-radius:2px"></div>
<svg class="a" style="left:1139px;top:800px" width="12" height="13"><path d="M9 2V11L3 6.5Z" fill="#d1d2d4"/></svg>
<div class="a" style="left:1153px;top:801px;width:429px;height:11px;background:#414851;border-radius:2px"></div>
<div class="a" style="left:1501px;top:801px;width:53px;height:11px;background:#5a626c;border-radius:2px"></div>
<svg class="a" style="left:1585px;top:800px" width="12" height="13"><path d="M3 2V11L9 6.5Z" fill="#d1d2d4"/></svg>
<div class="a" style="left:1381px;top:561px;width:216px;height:245px;border:3px solid #7ed321;border-radius:12px"></div>
<!-- status right -->
<div class="t" style="left:1242px;top:834px;font-size:15.5px">enter paint or fill mode to edit labels</div>
<svg class="a" style="left:1527px;top:836px" width="11" height="7"><path d="M0.5 6.5H10.5L5.5 1Z" fill="#f0f1f2"/></svg>
<div class="t" style="left:1541px;top:834px;font-size:15px">activity</div>
<!-- canvas -->
<div class="a" style="left:274px;top:89px;width:834px;height:723px;background:#000"></div>

<!-- blobs --><svg class="a" style="left:379px;top:141px" width="624" height="619" viewBox="0 0 624 619">
<defs><filter id="bl" x="-10%" y="-10%" width="120%" height="120%"><feGaussianBlur stdDeviation="4"/></filter>
<filter id="bl2" x="-10%" y="-10%" width="120%" height="120%"><feGaussianBlur stdDeviation="0.8"/></filter><filter id="bl3" x="-10%" y="-10%" width="120%" height="120%"><feGaussianBlur stdDeviation="2"/></filter>
<filter id="nz" x="0" y="0" width="100%" height="100%" color-interpolation-filters="sRGB"><feTurbulence type="fractalNoise" baseFrequency="0.12" numOctaves="2" seed="7"/><feColorMatrix type="matrix" values="0.3 0 0 0 0.09  0.3 0 0 0 0.09  0.3 0 0 0 0.09  0 0 0 0 1"/></filter></defs>
<rect width="624" height="619" fill="#2e2e2e"/>
<rect width="624" height="619" filter="url(#nz)"/>
<g filter="url(#bl)"><ellipse cx="46.0" cy="44.0" rx="29.0" ry="38.0" transform="rotate(15 46.0 44.0)" fill="#1e1e1e"/><ellipse cx="110.0" cy="64.5" rx="27.6" ry="30.7" transform="rotate(0 110.0 64.5)" fill="#1e1e1e"/><ellipse cx="154.0" cy="1.0" rx="34.0" ry="33.0" transform="rotate(0 154.0 1.0)" fill="#1e1e1e"/><ellipse cx="177.0" cy="100.0" rx="40.0" ry="46.0" transform="rotate(22 177.0 100.0)" fill="#1e1e1e"/><ellipse cx="19.0" cy="110.5" rx="19.0" ry="21.5" transform="rotate(0 19.0 110.5)" fill="#1e1e1e"/><ellipse cx="70.5" cy="140.5" rx="37.5" ry="41.7" transform="rotate(0 70.5 140.5)" fill="#1e1e1e"/><ellipse cx="82.5" cy="209.0" rx="28.3" ry="32.0" transform="rotate(0 82.5 209.0)" fill="#1e1e1e"/><ellipse cx="155.5" cy="205.0" rx="35.0" ry="36.5" transform="rotate(0 155.5 205.0)" fill="#1e1e1e"/><ellipse cx="23.0" cy="239.0" rx="31.0" ry="46.0" transform="rotate(0 23.0 239.0)" fill="#1e1e1e"/><ellipse cx="265.0" cy="34.0" rx="41.0" ry="42.0" transform="rotate(0 265.0 34.0)" fill="#1e1e1e"/><ellipse cx="379.0" cy="24.0" rx="36.0" ry="39.0" transform="rotate(0 379.0 24.0)" fill="#1e1e1e"/><ellipse cx="335.0" cy="53.4" rx="19.0" ry="19.7" transform="rotate(0 335.0 53.4)" fill="#1e1e1e"/><ellipse cx="425.0" cy="82.0" rx="38.0" ry="39.5" transform="rotate(0 425.0 82.0)" fill="#1e1e1e"/><ellipse cx="338.5" cy="134.0" rx="35.0" ry="40.0" transform="rotate(0 338.5 134.0)" fill="#1e1e1e"/><ellipse cx="241.0" cy="177.0" rx="33.0" ry="40.0" transform="rotate(10 241.0 177.0)" fill="#1e1e1e"/><ellipse cx="410.5" cy="179.0" rx="24.5" ry="27.5" transform="rotate(0 410.5 179.0)" fill="#1e1e1e"/><ellipse cx="483.0" cy="39.0" rx="30.7" ry="31.3" transform="rotate(0 483.0 39.0)" fill="#1e1e1e"/><ellipse cx="535.0" cy="67.6" rx="28.0" ry="35.0" transform="rotate(8 535.0 67.6)" fill="#1e1e1e"/><ellipse cx="601.0" cy="35.0" rx="31.0" ry="43.0" transform="rotate(0 601.0 35.0)" fill="#1e1e1e"/><ellipse cx="569.4" cy="116.7" rx="27.6" ry="30.0" transform="rotate(0 569.4 116.7)" fill="#1e1e1e"/><ellipse cx="523.5" cy="172.0" rx="29.5" ry="33.8" transform="rotate(0 523.5 172.0)" fill="#1e1e1e"/><ellipse cx="598.0" cy="178.0" rx="35.0" ry="35.0" transform="rotate(0 598.0 178.0)" fill="#1e1e1e"/><ellipse cx="90.5" cy="299.7" rx="37.5" ry="44.8" transform="rotate(0 90.5 299.7)" fill="#1e1e1e"/><ellipse cx="154.0" cy="299.5" rx="26.3" ry="27.6" transform="rotate(0 154.0 299.5)" fill="#1e1e1e"/><ellipse cx="19.0" cy="341.0" rx="28.0" ry="33.0" transform="rotate(0 19.0 341.0)" fill="#1e1e1e"/><ellipse cx="164.0" cy="359.0" rx="27.6" ry="32.0" transform="rotate(0 164.0 359.0)" fill="#1e1e1e"/><ellipse cx="40.0" cy="411.0" rx="34.0" ry="36.5" transform="rotate(0 40.0 411.0)" fill="#1e1e1e"/><ellipse cx="108.0" cy="420.0" rx="31.0" ry="39.0" transform="rotate(0 108.0 420.0)" fill="#1e1e1e"/><ellipse cx="215.6" cy="394.0" rx="35.0" ry="74.0" transform="rotate(20 215.6 394.0)" fill="#1e1e1e"/><ellipse cx="252.0" cy="271.5" rx="37.0" ry="32.5" transform="rotate(0 252.0 271.5)" fill="#1e1e1e"/><ellipse cx="424.0" cy="242.0" rx="50.0" ry="37.0" transform="rotate(8 424.0 242.0)" fill="#1e1e1e"/><ellipse cx="444.0" cy="259.0" rx="30.0" ry="27.0" transform="rotate(0 444.0 259.0)" fill="#1e1e1e"/><ellipse cx="543.6" cy="232.0" rx="30.0" ry="31.3" transform="rotate(0 543.6 232.0)" fill="#1e1e1e"/><ellipse cx="612.0" cy="255.0" rx="24.0" ry="32.5" transform="rotate(0 612.0 255.0)" fill="#1e1e1e"/><ellipse cx="547.0" cy="311.0" rx="43.5" ry="40.5" transform="rotate(0 547.0 311.0)" fill="#1e1e1e"/><ellipse cx="404.0" cy="322.0" rx="33.0" ry="58.0" transform="rotate(-32 404.0 322.0)" fill="#1e1e1e"/><ellipse cx="605.0" cy="367.0" rx="35.0" ry="58.0" transform="rotate(40 605.0 367.0)" fill="#1e1e1e"/><ellipse cx="459.5" cy="382.0" rx="24.5" ry="28.0" transform="rotate(0 459.5 382.0)" fill="#1e1e1e"/><ellipse cx="521.5" cy="407.0" rx="28.0" ry="31.5" transform="rotate(0 521.5 407.0)" fill="#1e1e1e"/><ellipse cx="334.0" cy="399.0" rx="37.0" ry="35.0" transform="rotate(0 334.0 399.0)" fill="#1e1e1e"/><ellipse cx="439.0" cy="442.0" rx="41.0" ry="45.0" transform="rotate(0 439.0 442.0)" fill="#1e1e1e"/><ellipse cx="568.6" cy="450.8" rx="35.6" ry="36.2" transform="rotate(0 568.6 450.8)" fill="#1e1e1e"/><ellipse cx="503.6" cy="495.0" rx="24.6" ry="29.0" transform="rotate(0 503.6 495.0)" fill="#1e1e1e"/><ellipse cx="621.0" cy="489.0" rx="22.0" ry="29.0" transform="rotate(0 621.0 489.0)" fill="#1e1e1e"/><ellipse cx="441.0" cy="562.0" rx="57.0" ry="42.0" transform="rotate(0 441.0 562.0)" fill="#1e1e1e"/><ellipse cx="571.7" cy="554.0" rx="42.3" ry="40.0" transform="rotate(0 571.7 554.0)" fill="#1e1e1e"/><ellipse cx="317.7" cy="482.7" rx="42.3" ry="39.9" transform="rotate(0 317.7 482.7)" fill="#1e1e1e"/><ellipse cx="252.5" cy="523.0" rx="41.0" ry="48.0" transform="rotate(-35 252.5 523.0)" fill="#1e1e1e"/><ellipse cx="337.2" cy="571.0" rx="28.8" ry="35.0" transform="rotate(0 337.2 571.0)" fill="#1e1e1e"/><ellipse cx="65.0" cy="525.0" rx="30.0" ry="50.0" transform="rotate(-18 65.0 525.0)" fill="#1e1e1e"/><ellipse cx="6.0" cy="551.0" rx="28.0" ry="40.0" transform="rotate(0 6.0 551.0)" fill="#1e1e1e"/><ellipse cx="151.8" cy="531.0" rx="36.0" ry="44.0" transform="rotate(0 151.8 531.0)" fill="#1e1e1e"/><ellipse cx="113.0" cy="587.6" rx="26.0" ry="30.7" transform="rotate(0 113.0 587.6)" fill="#1e1e1e"/><ellipse cx="181.0" cy="621.0" rx="27.0" ry="22.0" transform="rotate(0 181.0 621.0)" fill="#1e1e1e"/><ellipse cx="311.0" cy="621.0" rx="36.0" ry="23.0" transform="rotate(0 311.0 621.0)" fill="#1e1e1e"/><ellipse cx="436.0" cy="621.0" rx="30.0" ry="23.0" transform="rotate(0 436.0 621.0)" fill="#1e1e1e"/><ellipse cx="573.0" cy="622.0" rx="26.0" ry="23.0" transform="rotate(0 573.0 622.0)" fill="#1e1e1e"/><ellipse cx="2.0" cy="64.0" rx="14.0" ry="22.0" transform="rotate(0 2.0 64.0)" fill="#1e1e1e"/><ellipse cx="307.0" cy="317.0" rx="32.0" ry="58.0" transform="rotate(18 307.0 317.0)" fill="#1e1e1e"/><ellipse cx="475.0" cy="144.0" rx="28.0" ry="48.0" transform="rotate(20 475.0 144.0)" fill="#1e1e1e"/><ellipse cx="310.0" cy="209.0" rx="32.0" ry="32.0" transform="rotate(0 310.0 209.0)" fill="#1e1e1e"/><ellipse cx="333.0" cy="197.0" rx="33.0" ry="22.0" transform="rotate(-8 333.0 197.0)" fill="#1e1e1e"/></g>
<g filter="url(#bl3)"><ellipse cx="46.0" cy="44.0" rx="24.5" ry="33.5" transform="rotate(15 46.0 44.0)" fill="#8e8e8e"/><ellipse cx="110.0" cy="64.5" rx="23.1" ry="26.2" transform="rotate(0 110.0 64.5)" fill="#8e8e8e"/><ellipse cx="154.0" cy="1.0" rx="29.5" ry="28.5" transform="rotate(0 154.0 1.0)" fill="#8e8e8e"/><ellipse cx="177.0" cy="100.0" rx="35.5" ry="41.5" transform="rotate(22 177.0 100.0)" fill="#8e8e8e"/><ellipse cx="19.0" cy="110.5" rx="14.5" ry="17.0" transform="rotate(0 19.0 110.5)" fill="#8e8e8e"/><ellipse cx="70.5" cy="140.5" rx="33.0" ry="37.2" transform="rotate(0 70.5 140.5)" fill="#8e8e8e"/><ellipse cx="82.5" cy="209.0" rx="23.8" ry="27.5" transform="rotate(0 82.5 209.0)" fill="#8e8e8e"/><ellipse cx="155.5" cy="205.0" rx="30.5" ry="32.0" transform="rotate(0 155.5 205.0)" fill="#8e8e8e"/><ellipse cx="23.0" cy="239.0" rx="26.5" ry="41.5" transform="rotate(0 23.0 239.0)" fill="#8e8e8e"/><ellipse cx="265.0" cy="34.0" rx="36.5" ry="37.5" transform="rotate(0 265.0 34.0)" fill="#8e8e8e"/><ellipse cx="379.0" cy="24.0" rx="31.5" ry="34.5" transform="rotate(0 379.0 24.0)" fill="#8e8e8e"/><ellipse cx="335.0" cy="53.4" rx="14.5" ry="15.2" transform="rotate(0 335.0 53.4)" fill="#8e8e8e"/><ellipse cx="425.0" cy="82.0" rx="33.5" ry="35.0" transform="rotate(0 425.0 82.0)" fill="#8e8e8e"/><ellipse cx="338.5" cy="134.0" rx="30.5" ry="35.5" transform="rotate(0 338.5 134.0)" fill="#8e8e8e"/><ellipse cx="241.0" cy="177.0" rx="28.5" ry="35.5" transform="rotate(10 241.0 177.0)" fill="#8e8e8e"/><ellipse cx="410.5" cy="179.0" rx="20.0" ry="23.0" transform="rotate(0 410.5 179.0)" fill="#8e8e8e"/><ellipse cx="483.0" cy="39.0" rx="26.2" ry="26.8" transform="rotate(0 483.0 39.0)" fill="#8e8e8e"/><ellipse cx="535.0" cy="67.6" rx="23.5" ry="30.5" transform="rotate(8 535.0 67.6)" fill="#8e8e8e"/><ellipse cx="601.0" cy="35.0" rx="26.5" ry="38.5" transform="rotate(0 601.0 35.0)" fill="#8e8e8e"/><ellipse cx="569.4" cy="116.7" rx="23.1" ry="25.5" transform="rotate(0 569.4 116.7)" fill="#8e8e8e"/><ellipse cx="523.5" cy="172.0" rx="25.0" ry="29.3" transform="rotate(0 523.5 172.0)" fill="#8e8e8e"/><ellipse cx="598.0" cy="178.0" rx="30.5" ry="30.5" transform="rotate(0 598.0 178.0)" fill="#8e8e8e"/><ellipse cx="90.5" cy="299.7" rx="33.0" ry="40.3" transform="rotate(0 90.5 299.7)" fill="#8e8e8e"/><ellipse cx="154.0" cy="299.5" rx="21.8" ry="23.1" transform="rotate(0 154.0 299.5)" fill="#8e8e8e"/><ellipse cx="19.0" cy="341.0" rx="23.5" ry="28.5" transform="rotate(0 19.0 341.0)" fill="#8e8e8e"/><ellipse cx="164.0" cy="359.0" rx="23.1" ry="27.5" transform="rotate(0 164.0 359.0)" fill="#8e8e8e"/><ellipse cx="40.0" cy="411.0" rx="29.5" ry="32.0" transform="rotate(0 40.0 411.0)" fill="#8e8e8e"/><ellipse cx="108.0" cy="420.0" rx="26.5" ry="34.5" transform="rotate(0 108.0 420.0)" fill="#8e8e8e"/><ellipse cx="215.6" cy="394.0" rx="30.5" ry="69.5" transform="rotate(20 215.6 394.0)" fill="#8e8e8e"/><ellipse cx="252.0" cy="271.5" rx="32.5" ry="28.0" transform="rotate(0 252.0 271.5)" fill="#8e8e8e"/><ellipse cx="424.0" cy="242.0" rx="45.5" ry="32.5" transform="rotate(8 424.0 242.0)" fill="#8e8e8e"/><ellipse cx="444.0" cy="259.0" rx="25.5" ry="22.5" transform="rotate(0 444.0 259.0)" fill="#8e8e8e"/><ellipse cx="543.6" cy="232.0" rx="25.5" ry="26.8" transform="rotate(0 543.6 232.0)" fill="#8e8e8e"/><ellipse cx="612.0" cy="255.0" rx="19.5" ry="28.0" transform="rotate(0 612.0 255.0)" fill="#8e8e8e"/><ellipse cx="547.0" cy="311.0" rx="39.0" ry="36.0" transform="rotate(0 547.0 311.0)" fill="#8e8e8e"/><ellipse cx="404.0" cy="322.0" rx="28.5" ry="53.5" transform="rotate(-32 404.0 322.0)" fill="#8e8e8e"/><ellipse cx="605.0" cy="367.0" rx="30.5" ry="53.5" transform="rotate(40 605.0 367.0)" fill="#8e8e8e"/><ellipse cx="459.5" cy="382.0" rx="20.0" ry="23.5" transform="rotate(0 459.5 382.0)" fill="#8e8e8e"/><ellipse cx="521.5" cy="407.0" rx="23.5" ry="27.0" transform="rotate(0 521.5 407.0)" fill="#8e8e8e"/><ellipse cx="334.0" cy="399.0" rx="32.5" ry="30.5" transform="rotate(0 334.0 399.0)" fill="#8e8e8e"/><ellipse cx="439.0" cy="442.0" rx="36.5" ry="40.5" transform="rotate(0 439.0 442.0)" fill="#8e8e8e"/><ellipse cx="568.6" cy="450.8" rx="31.1" ry="31.7" transform="rotate(0 568.6 450.8)" fill="#8e8e8e"/><ellipse cx="503.6" cy="495.0" rx="20.1" ry="24.5" transform="rotate(0 503.6 495.0)" fill="#8e8e8e"/><ellipse cx="621.0" cy="489.0" rx="17.5" ry="24.5" transform="rotate(0 621.0 489.0)" fill="#8e8e8e"/><ellipse cx="441.0" cy="562.0" rx="52.5" ry="37.5" transform="rotate(0 441.0 562.0)" fill="#8e8e8e"/><ellipse cx="571.7" cy="554.0" rx="37.8" ry="35.5" transform="rotate(0 571.7 554.0)" fill="#8e8e8e"/><ellipse cx="317.7" cy="482.7" rx="37.8" ry="35.4" transform="rotate(0 317.7 482.7)" fill="#8e8e8e"/><ellipse cx="252.5" cy="523.0" rx="36.5" ry="43.5" transform="rotate(-35 252.5 523.0)" fill="#8e8e8e"/><ellipse cx="337.2" cy="571.0" rx="24.3" ry="30.5" transform="rotate(0 337.2 571.0)" fill="#8e8e8e"/><ellipse cx="65.0" cy="525.0" rx="25.5" ry="45.5" transform="rotate(-18 65.0 525.0)" fill="#8e8e8e"/><ellipse cx="6.0" cy="551.0" rx="23.5" ry="35.5" transform="rotate(0 6.0 551.0)" fill="#8e8e8e"/><ellipse cx="151.8" cy="531.0" rx="31.5" ry="39.5" transform="rotate(0 151.8 531.0)" fill="#8e8e8e"/><ellipse cx="113.0" cy="587.6" rx="21.5" ry="26.2" transform="rotate(0 113.0 587.6)" fill="#8e8e8e"/><ellipse cx="181.0" cy="621.0" rx="22.5" ry="17.5" transform="rotate(0 181.0 621.0)" fill="#8e8e8e"/><ellipse cx="311.0" cy="621.0" rx="31.5" ry="18.5" transform="rotate(0 311.0 621.0)" fill="#8e8e8e"/><ellipse cx="436.0" cy="621.0" rx="25.5" ry="18.5" transform="rotate(0 436.0 621.0)" fill="#8e8e8e"/><ellipse cx="573.0" cy="622.0" rx="21.5" ry="18.5" transform="rotate(0 573.0 622.0)" fill="#8e8e8e"/><ellipse cx="2.0" cy="64.0" rx="9.5" ry="17.5" transform="rotate(0 2.0 64.0)" fill="#8e8e8e"/><ellipse cx="307.0" cy="317.0" rx="27.5" ry="53.5" transform="rotate(18 307.0 317.0)" fill="#8e8e8e"/><ellipse cx="475.0" cy="144.0" rx="23.5" ry="43.5" transform="rotate(20 475.0 144.0)" fill="#8e8e8e"/><ellipse cx="310.0" cy="209.0" rx="27.5" ry="27.5" transform="rotate(0 310.0 209.0)" fill="#8e8e8e"/><ellipse cx="333.0" cy="197.0" rx="28.5" ry="17.5" transform="rotate(-8 333.0 197.0)" fill="#8e8e8e"/><circle cx="204" cy="278" r="5" fill="#8a8a8a"/><circle cx="336" cy="237" r="6" fill="#8a8a8a"/><circle cx="614" cy="305" r="8" fill="#8a8a8a"/><circle cx="187" cy="593" r="6" fill="#8a8a8a"/><circle cx="269" cy="600" r="6" fill="#8a8a8a"/></g>
<g filter="url(#bl2)"><ellipse cx="46.0" cy="44.0" rx="22.2" ry="31.2" transform="rotate(15 46.0 44.0)" fill="#a8a8a8"/><ellipse cx="110.0" cy="64.5" rx="20.8" ry="23.9" transform="rotate(0 110.0 64.5)" fill="#a8a8a8"/><ellipse cx="154.0" cy="1.0" rx="27.2" ry="26.2" transform="rotate(0 154.0 1.0)" fill="#a8a8a8"/><ellipse cx="177.0" cy="100.0" rx="33.2" ry="39.2" transform="rotate(22 177.0 100.0)" fill="#a8a8a8"/><ellipse cx="19.0" cy="110.5" rx="12.2" ry="14.7" transform="rotate(0 19.0 110.5)" fill="#a8a8a8"/><ellipse cx="70.5" cy="140.5" rx="30.7" ry="34.9" transform="rotate(0 70.5 140.5)" fill="#a8a8a8"/><ellipse cx="82.5" cy="209.0" rx="21.5" ry="25.2" transform="rotate(0 82.5 209.0)" fill="#a8a8a8"/><ellipse cx="155.5" cy="205.0" rx="28.2" ry="29.7" transform="rotate(0 155.5 205.0)" fill="#a8a8a8"/><ellipse cx="23.0" cy="239.0" rx="24.2" ry="39.2" transform="rotate(0 23.0 239.0)" fill="#a8a8a8"/><ellipse cx="265.0" cy="34.0" rx="34.2" ry="35.2" transform="rotate(0 265.0 34.0)" fill="#a8a8a8"/><ellipse cx="379.0" cy="24.0" rx="29.2" ry="32.2" transform="rotate(0 379.0 24.0)" fill="#a8a8a8"/><ellipse cx="335.0" cy="53.4" rx="12.2" ry="12.9" transform="rotate(0 335.0 53.4)" fill="#a8a8a8"/><ellipse cx="425.0" cy="82.0" rx="31.2" ry="32.7" transform="rotate(0 425.0 82.0)" fill="#a8a8a8"/><ellipse cx="338.5" cy="134.0" rx="28.2" ry="33.2" transform="rotate(0 338.5 134.0)" fill="#a8a8a8"/><ellipse cx="241.0" cy="177.0" rx="26.2" ry="33.2" transform="rotate(10 241.0 177.0)" fill="#a8a8a8"/><ellipse cx="410.5" cy="179.0" rx="17.7" ry="20.7" transform="rotate(0 410.5 179.0)" fill="#a8a8a8"/><ellipse cx="483.0" cy="39.0" rx="23.9" ry="24.5" transform="rotate(0 483.0 39.0)" fill="#a8a8a8"/><ellipse cx="535.0" cy="67.6" rx="21.2" ry="28.2" transform="rotate(8 535.0 67.6)" fill="#a8a8a8"/><ellipse cx="601.0" cy="35.0" rx="24.2" ry="36.2" transform="rotate(0 601.0 35.0)" fill="#a8a8a8"/><ellipse cx="569.4" cy="116.7" rx="20.8" ry="23.2" transform="rotate(0 569.4 116.7)" fill="#a8a8a8"/><ellipse cx="523.5" cy="172.0" rx="22.7" ry="27.0" transform="rotate(0 523.5 172.0)" fill="#a8a8a8"/><ellipse cx="598.0" cy="178.0" rx="28.2" ry="28.2" transform="rotate(0 598.0 178.0)" fill="#a8a8a8"/><ellipse cx="90.5" cy="299.7" rx="30.7" ry="38.0" transform="rotate(0 90.5 299.7)" fill="#a8a8a8"/><ellipse cx="154.0" cy="299.5" rx="19.5" ry="20.8" transform="rotate(0 154.0 299.5)" fill="#a8a8a8"/><ellipse cx="19.0" cy="341.0" rx="21.2" ry="26.2" transform="rotate(0 19.0 341.0)" fill="#a8a8a8"/><ellipse cx="164.0" cy="359.0" rx="20.8" ry="25.2" transform="rotate(0 164.0 359.0)" fill="#a8a8a8"/><ellipse cx="40.0" cy="411.0" rx="27.2" ry="29.7" transform="rotate(0 40.0 411.0)" fill="#a8a8a8"/><ellipse cx="108.0" cy="420.0" rx="24.2" ry="32.2" transform="rotate(0 108.0 420.0)" fill="#a8a8a8"/><ellipse cx="215.6" cy="394.0" rx="28.2" ry="67.2" transform="rotate(20 215.6 394.0)" fill="#a8a8a8"/><ellipse cx="252.0" cy="271.5" rx="30.2" ry="25.7" transform="rotate(0 252.0 271.5)" fill="#a8a8a8"/><ellipse cx="424.0" cy="242.0" rx="43.2" ry="30.2" transform="rotate(8 424.0 242.0)" fill="#a8a8a8"/><ellipse cx="444.0" cy="259.0" rx="23.2" ry="20.2" transform="rotate(0 444.0 259.0)" fill="#a8a8a8"/><ellipse cx="543.6" cy="232.0" rx="23.2" ry="24.5" transform="rotate(0 543.6 232.0)" fill="#a8a8a8"/><ellipse cx="612.0" cy="255.0" rx="17.2" ry="25.7" transform="rotate(0 612.0 255.0)" fill="#a8a8a8"/><ellipse cx="547.0" cy="311.0" rx="36.7" ry="33.7" transform="rotate(0 547.0 311.0)" fill="#a8a8a8"/><ellipse cx="404.0" cy="322.0" rx="26.2" ry="51.2" transform="rotate(-32 404.0 322.0)" fill="#a8a8a8"/><ellipse cx="605.0" cy="367.0" rx="28.2" ry="51.2" transform="rotate(40 605.0 367.0)" fill="#a8a8a8"/><ellipse cx="459.5" cy="382.0" rx="17.7" ry="21.2" transform="rotate(0 459.5 382.0)" fill="#a8a8a8"/><ellipse cx="521.5" cy="407.0" rx="21.2" ry="24.7" transform="rotate(0 521.5 407.0)" fill="#a8a8a8"/><ellipse cx="334.0" cy="399.0" rx="30.2" ry="28.2" transform="rotate(0 334.0 399.0)" fill="#a8a8a8"/><ellipse cx="439.0" cy="442.0" rx="34.2" ry="38.2" transform="rotate(0 439.0 442.0)" fill="#a8a8a8"/><ellipse cx="568.6" cy="450.8" rx="28.8" ry="29.4" transform="rotate(0 568.6 450.8)" fill="#a8a8a8"/><ellipse cx="503.6" cy="495.0" rx="17.8" ry="22.2" transform="rotate(0 503.6 495.0)" fill="#a8a8a8"/><ellipse cx="621.0" cy="489.0" rx="15.2" ry="22.2" transform="rotate(0 621.0 489.0)" fill="#a8a8a8"/><ellipse cx="441.0" cy="562.0" rx="50.2" ry="35.2" transform="rotate(0 441.0 562.0)" fill="#a8a8a8"/><ellipse cx="571.7" cy="554.0" rx="35.5" ry="33.2" transform="rotate(0 571.7 554.0)" fill="#a8a8a8"/><ellipse cx="317.7" cy="482.7" rx="35.5" ry="33.1" transform="rotate(0 317.7 482.7)" fill="#a8a8a8"/><ellipse cx="252.5" cy="523.0" rx="34.2" ry="41.2" transform="rotate(-35 252.5 523.0)" fill="#a8a8a8"/><ellipse cx="337.2" cy="571.0" rx="22.0" ry="28.2" transform="rotate(0 337.2 571.0)" fill="#a8a8a8"/><ellipse cx="65.0" cy="525.0" rx="23.2" ry="43.2" transform="rotate(-18 65.0 525.0)" fill="#a8a8a8"/><ellipse cx="6.0" cy="551.0" rx="21.2" ry="33.2" transform="rotate(0 6.0 551.0)" fill="#a8a8a8"/><ellipse cx="151.8" cy="531.0" rx="29.2" ry="37.2" transform="rotate(0 151.8 531.0)" fill="#a8a8a8"/><ellipse cx="113.0" cy="587.6" rx="19.2" ry="23.9" transform="rotate(0 113.0 587.6)" fill="#a8a8a8"/><ellipse cx="181.0" cy="621.0" rx="20.2" ry="15.2" transform="rotate(0 181.0 621.0)" fill="#a8a8a8"/><ellipse cx="311.0" cy="621.0" rx="29.2" ry="16.2" transform="rotate(0 311.0 621.0)" fill="#a8a8a8"/><ellipse cx="436.0" cy="621.0" rx="23.2" ry="16.2" transform="rotate(0 436.0 621.0)" fill="#a8a8a8"/><ellipse cx="573.0" cy="622.0" rx="19.2" ry="16.2" transform="rotate(0 573.0 622.0)" fill="#a8a8a8"/><ellipse cx="2.0" cy="64.0" rx="7.2" ry="15.2" transform="rotate(0 2.0 64.0)" fill="#a8a8a8"/><ellipse cx="307.0" cy="317.0" rx="25.2" ry="51.2" transform="rotate(18 307.0 317.0)" fill="#a8a8a8"/><ellipse cx="475.0" cy="144.0" rx="21.2" ry="41.2" transform="rotate(20 475.0 144.0)" fill="#a8a8a8"/><ellipse cx="310.0" cy="209.0" rx="25.2" ry="25.2" transform="rotate(0 310.0 209.0)" fill="#a8a8a8"/><ellipse cx="333.0" cy="197.0" rx="26.2" ry="15.2" transform="rotate(-8 333.0 197.0)" fill="#a8a8a8"/></g>
<g><ellipse cx="46.0" cy="44.0" rx="21.0" ry="30.0" transform="rotate(15 46.0 44.0)" fill="#adb6c0"/><ellipse cx="110.0" cy="64.5" rx="19.6" ry="22.7" transform="rotate(0 110.0 64.5)" fill="#3a7a64"/><ellipse cx="154.0" cy="1.0" rx="26.0" ry="25.0" transform="rotate(0 154.0 1.0)" fill="#6ccde8"/><ellipse cx="177.0" cy="100.0" rx="32.0" ry="38.0" transform="rotate(22 177.0 100.0)" fill="#5c45a6"/><ellipse cx="19.0" cy="110.5" rx="11.0" ry="13.5" transform="rotate(0 19.0 110.5)" fill="#e29c3c"/><ellipse cx="70.5" cy="140.5" rx="29.5" ry="33.7" transform="rotate(0 70.5 140.5)" fill="#ea7c86"/><ellipse cx="82.5" cy="209.0" rx="20.3" ry="24.0" transform="rotate(0 82.5 209.0)" fill="#ddc8a6"/><ellipse cx="155.5" cy="205.0" rx="27.0" ry="28.5" transform="rotate(0 155.5 205.0)" fill="#c03c60"/><ellipse cx="23.0" cy="239.0" rx="23.0" ry="38.0" transform="rotate(0 23.0 239.0)" fill="#d455d4"/><ellipse cx="265.0" cy="34.0" rx="33.0" ry="34.0" transform="rotate(0 265.0 34.0)" fill="#b9e6a0"/><ellipse cx="379.0" cy="24.0" rx="28.0" ry="31.0" transform="rotate(0 379.0 24.0)" fill="#7f70c2"/><ellipse cx="335.0" cy="53.4" rx="11.0" ry="11.7" transform="rotate(0 335.0 53.4)" fill="#e8d83a"/><ellipse cx="425.0" cy="82.0" rx="30.0" ry="31.5" transform="rotate(0 425.0 82.0)" fill="#3458d8"/><ellipse cx="338.5" cy="134.0" rx="27.0" ry="32.0" transform="rotate(0 338.5 134.0)" fill="#72b89a"/><ellipse cx="241.0" cy="177.0" rx="25.0" ry="32.0" transform="rotate(10 241.0 177.0)" fill="#c375ea"/><ellipse cx="410.5" cy="179.0" rx="16.5" ry="19.5" transform="rotate(0 410.5 179.0)" fill="#eab6ea"/><ellipse cx="483.0" cy="39.0" rx="22.7" ry="23.3" transform="rotate(0 483.0 39.0)" fill="#c89ccc"/><ellipse cx="535.0" cy="67.6" rx="20.0" ry="27.0" transform="rotate(8 535.0 67.6)" fill="#c0ae98"/><ellipse cx="601.0" cy="35.0" rx="23.0" ry="35.0" transform="rotate(0 601.0 35.0)" fill="#c28c62"/><ellipse cx="569.4" cy="116.7" rx="19.6" ry="22.0" transform="rotate(0 569.4 116.7)" fill="#9ae83c"/><ellipse cx="523.5" cy="172.0" rx="21.5" ry="25.8" transform="rotate(0 523.5 172.0)" fill="#72c9a2"/><ellipse cx="598.0" cy="178.0" rx="27.0" ry="27.0" transform="rotate(0 598.0 178.0)" fill="#7a5254"/><ellipse cx="90.5" cy="299.7" rx="29.5" ry="36.8" transform="rotate(0 90.5 299.7)" fill="#c06a92"/><ellipse cx="154.0" cy="299.5" rx="18.3" ry="19.6" transform="rotate(0 154.0 299.5)" fill="#a48272"/><ellipse cx="19.0" cy="341.0" rx="20.0" ry="25.0" transform="rotate(0 19.0 341.0)" fill="#8244c4"/><ellipse cx="164.0" cy="359.0" rx="19.6" ry="24.0" transform="rotate(0 164.0 359.0)" fill="#b8e4a0"/><ellipse cx="40.0" cy="411.0" rx="26.0" ry="28.5" transform="rotate(0 40.0 411.0)" fill="#c274ea"/><ellipse cx="108.0" cy="420.0" rx="23.0" ry="31.0" transform="rotate(0 108.0 420.0)" fill="#8cbf80"/><ellipse cx="215.6" cy="394.0" rx="27.0" ry="66.0" transform="rotate(20 215.6 394.0)" fill="#86a872"/><ellipse cx="252.0" cy="271.5" rx="29.0" ry="24.5" transform="rotate(0 252.0 271.5)" fill="#e2a472"/><ellipse cx="424.0" cy="242.0" rx="42.0" ry="29.0" transform="rotate(8 424.0 242.0)" fill="#869a66"/><ellipse cx="444.0" cy="259.0" rx="22.0" ry="19.0" transform="rotate(0 444.0 259.0)" fill="#869a66"/><ellipse cx="543.6" cy="232.0" rx="22.0" ry="23.3" transform="rotate(0 543.6 232.0)" fill="#b274b2"/><ellipse cx="612.0" cy="255.0" rx="16.0" ry="24.5" transform="rotate(0 612.0 255.0)" fill="#eab274"/><ellipse cx="547.0" cy="311.0" rx="35.5" ry="32.5" transform="rotate(0 547.0 311.0)" fill="#7ed8f2"/><ellipse cx="404.0" cy="322.0" rx="25.0" ry="50.0" transform="rotate(-32 404.0 322.0)" fill="#a89cec"/><ellipse cx="605.0" cy="367.0" rx="27.0" ry="50.0" transform="rotate(40 605.0 367.0)" fill="#aac6ce"/><ellipse cx="459.5" cy="382.0" rx="16.5" ry="20.0" transform="rotate(0 459.5 382.0)" fill="#62b892"/><ellipse cx="521.5" cy="407.0" rx="20.0" ry="23.5" transform="rotate(0 521.5 407.0)" fill="#e8665e"/><ellipse cx="334.0" cy="399.0" rx="29.0" ry="27.0" transform="rotate(0 334.0 399.0)" fill="#eae244"/><ellipse cx="439.0" cy="442.0" rx="33.0" ry="37.0" transform="rotate(0 439.0 442.0)" fill="#f0a2ba"/><ellipse cx="568.6" cy="450.8" rx="27.6" ry="28.2" transform="rotate(0 568.6 450.8)" fill="#5c7a52"/><ellipse cx="503.6" cy="495.0" rx="16.6" ry="21.0" transform="rotate(0 503.6 495.0)" fill="#6c6c82"/><ellipse cx="621.0" cy="489.0" rx="14.0" ry="21.0" transform="rotate(0 621.0 489.0)" fill="#a87a72"/><ellipse cx="441.0" cy="562.0" rx="49.0" ry="34.0" transform="rotate(0 441.0 562.0)" fill="#c8d272"/><ellipse cx="571.7" cy="554.0" rx="34.3" ry="32.0" transform="rotate(0 571.7 554.0)" fill="#80585a"/><ellipse cx="317.7" cy="482.7" rx="34.3" ry="31.9" transform="rotate(0 317.7 482.7)" fill="#80c2e2"/><ellipse cx="252.5" cy="523.0" rx="33.0" ry="40.0" transform="rotate(-35 252.5 523.0)" fill="#64dcac"/><ellipse cx="337.2" cy="571.0" rx="20.8" ry="27.0" transform="rotate(0 337.2 571.0)" fill="#b08058"/><ellipse cx="65.0" cy="525.0" rx="22.0" ry="42.0" transform="rotate(-18 65.0 525.0)" fill="#5f4a63"/><ellipse cx="6.0" cy="551.0" rx="20.0" ry="32.0" transform="rotate(0 6.0 551.0)" fill="#a85c44"/><ellipse cx="151.8" cy="531.0" rx="28.0" ry="36.0" transform="rotate(0 151.8 531.0)" fill="#c25a8c"/><ellipse cx="113.0" cy="587.6" rx="18.0" ry="22.7" transform="rotate(0 113.0 587.6)" fill="#b27454"/><ellipse cx="181.0" cy="621.0" rx="19.0" ry="14.0" transform="rotate(0 181.0 621.0)" fill="#e0d4b0"/><ellipse cx="311.0" cy="621.0" rx="28.0" ry="15.0" transform="rotate(0 311.0 621.0)" fill="#c294d4"/><ellipse cx="436.0" cy="621.0" rx="22.0" ry="15.0" transform="rotate(0 436.0 621.0)" fill="#c090d0"/><ellipse cx="573.0" cy="622.0" rx="18.0" ry="15.0" transform="rotate(0 573.0 622.0)" fill="#84b464"/><ellipse cx="2.0" cy="64.0" rx="6.0" ry="14.0" transform="rotate(0 2.0 64.0)" fill="#b8d860"/><ellipse cx="307.0" cy="317.0" rx="24.0" ry="50.0" transform="rotate(18 307.0 317.0)" fill="#6a5cba"/><ellipse cx="475.0" cy="144.0" rx="20.0" ry="40.0" transform="rotate(20 475.0 144.0)" fill="#62d2aa"/><ellipse cx="310.0" cy="209.0" rx="24.0" ry="24.0" transform="rotate(0 310.0 209.0)" fill="#a87050"/><ellipse cx="333.0" cy="197.0" rx="25.0" ry="14.0" transform="rotate(-8 333.0 197.0)" fill="#a87050"/><clipPath id="c12"><rect x="0" y="0" width="624" height="23"/></clipPath><ellipse cx="265" cy="34" rx="33" ry="34" fill="#a8a2e6" clip-path="url(#c12)"/><path d="M40 0H85L68 31L39 13Z" fill="#a45a3c"/><clipPath id="cp1"><path d="M0 0H624V628L0 34Z"/></clipPath><clipPath id="cp2"><path d="M0 0H624V194L0 1.7Z"/></clipPath><g clip-path="url(#cp1)"><ellipse cx="307" cy="317" rx="24" ry="50" transform="rotate(18 307 317)" fill="#cde4e4"/></g><g clip-path="url(#cp2)"><ellipse cx="475" cy="144" rx="20" ry="40" transform="rotate(20 475 144)" fill="#e2dab2"/></g></g>
</svg><!-- /blobs -->
</body></html>
